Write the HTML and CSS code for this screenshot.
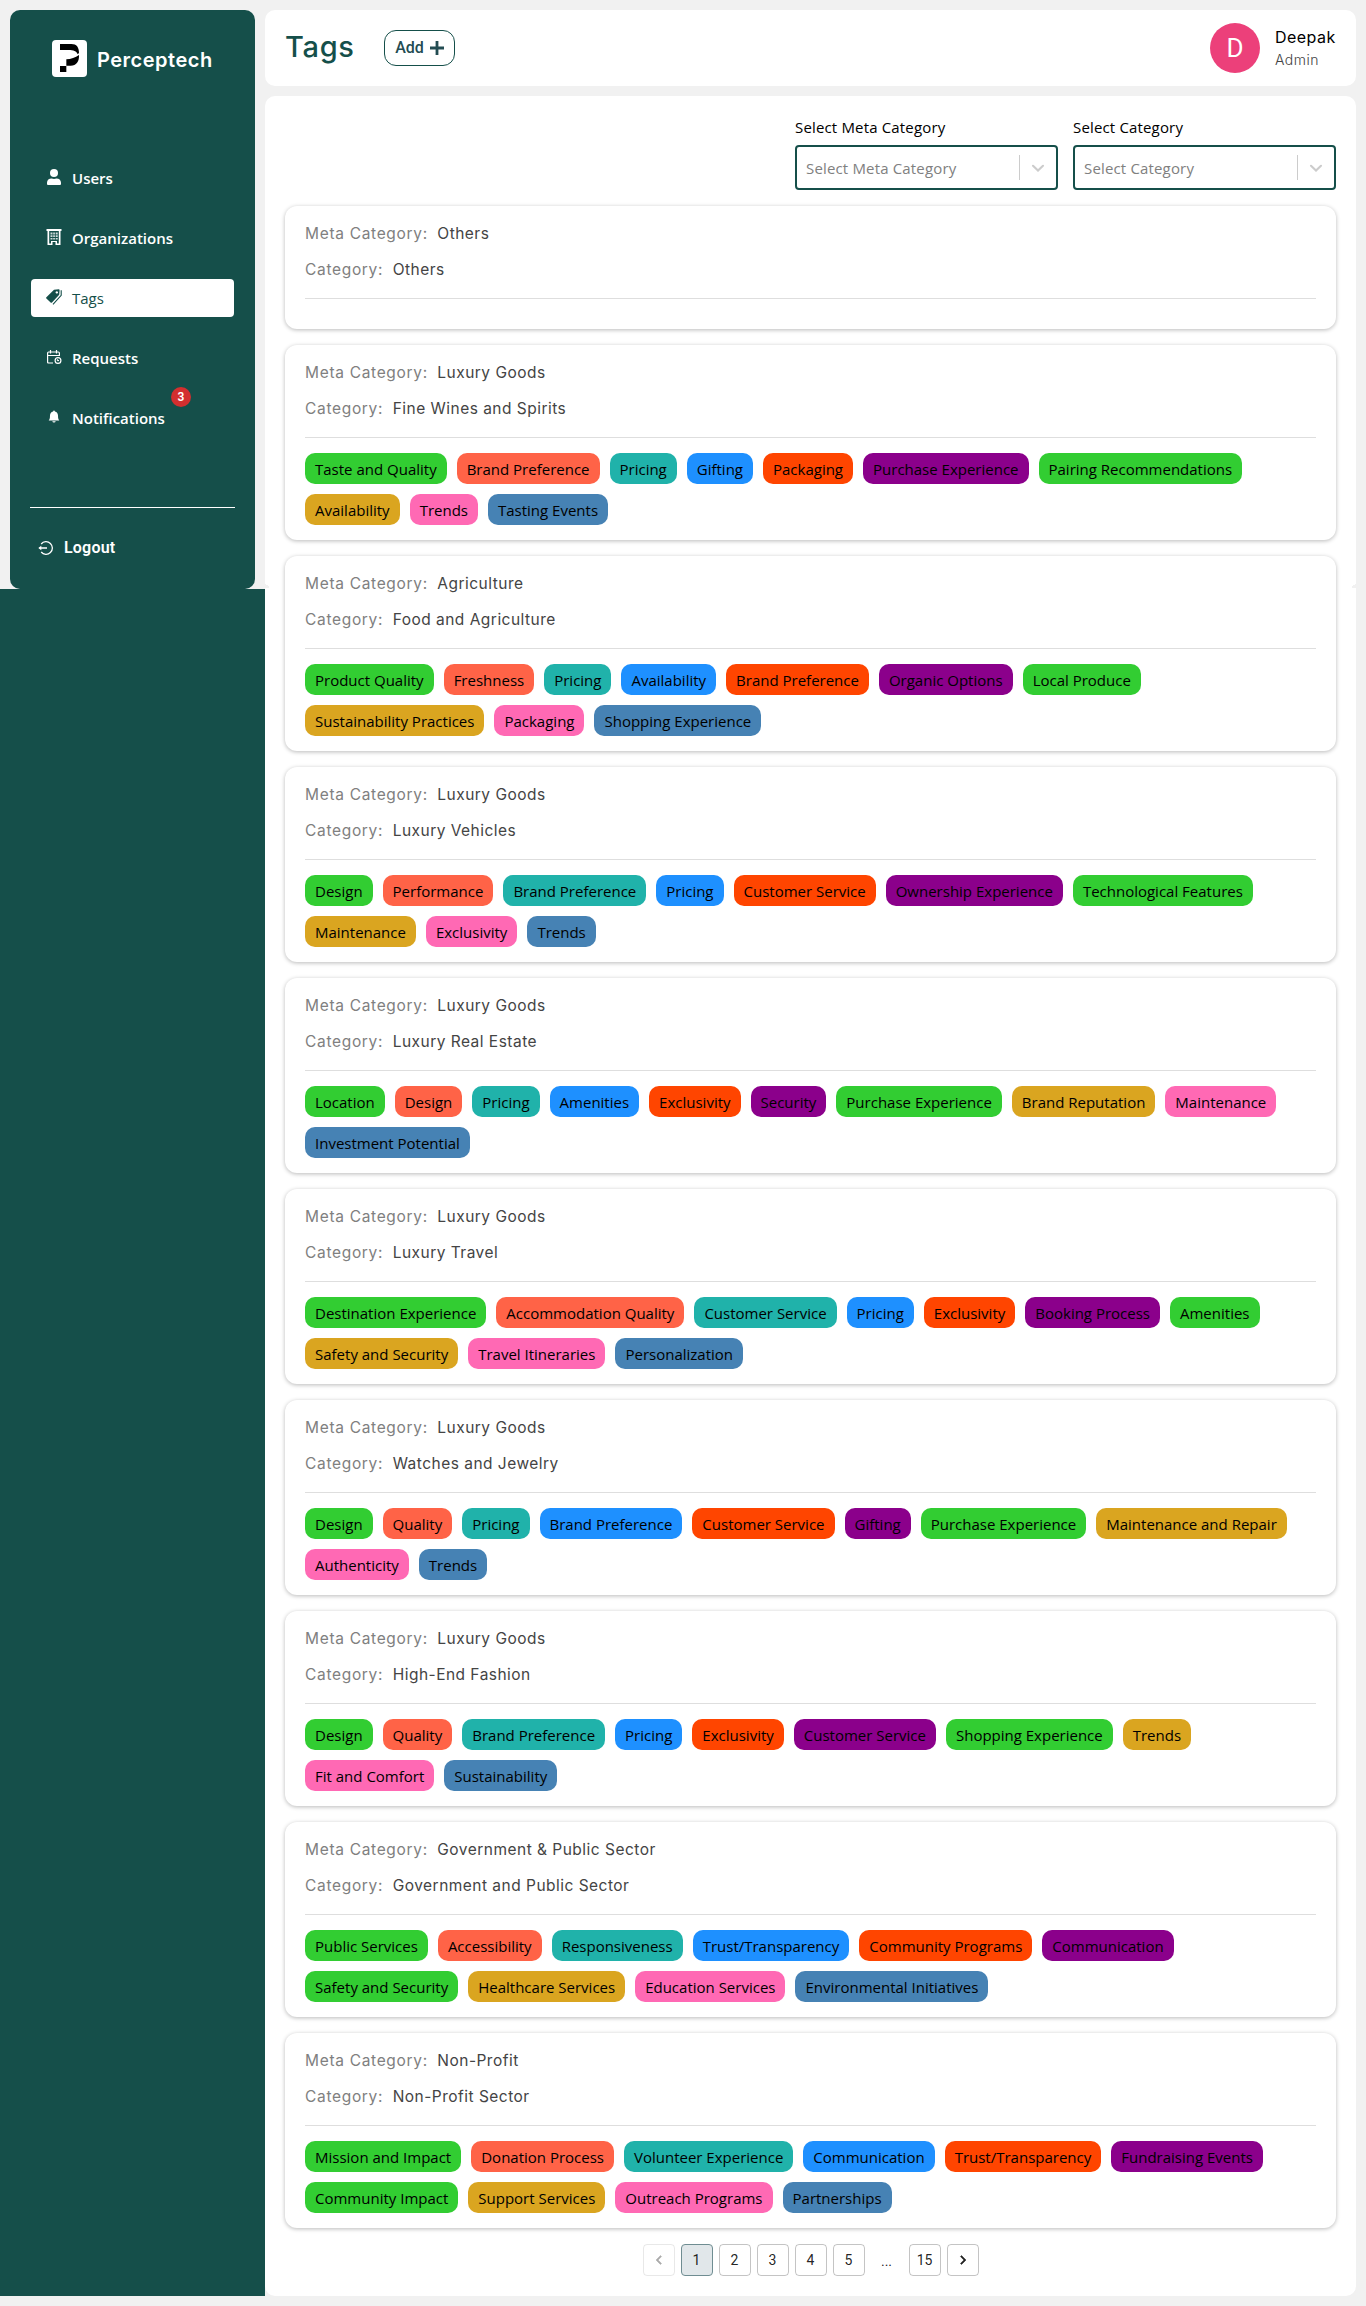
FILE: index.html
```html
<!DOCTYPE html>
<html lang="en">
<head>
<meta charset="utf-8">
<title>Tags</title>
<link rel="stylesheet" href="styles.css">
</head>
<body>
<div class="app">
  <aside class="rail">
    <div class="rail-frame">
      <nav class="sidebar">
        <div class="brand">
          <span class="logo"><svg width="35" height="37" viewBox="0 0 105 111"><path d="M24 12h34c16 0 23 10 23 27l-4 4C74 33 64 30 50 30H24z"/><path d="M43 58c14-1 27-5 38-13 1 20-8 32-25 32H43z"/><path d="M24 78h19v18H24z"/></svg></span>
          <span class="brand-name">Perceptech</span>
        </div>
        <ul class="nav">
          <li class="nav-item"><svg class="icon" viewBox="0 0 16 16"><circle cx="8" cy="4" r="4" fill="currentColor"/><path d="M1 16v-2.2C1 11 3 9.500 5.500 9.500c1.600.6 3.400.6 5 0C13 9.500 15 11 15 13.800V15q0 1-1 1H2q-1 0-1-1z" fill="currentColor"/></svg><span>Users</span></li>
          <li class="nav-item"><svg class="icon" viewBox="0 0 16 16" fill="currentColor" fill-rule="evenodd"><path d="M.5 0h15v2h-1v14h-5v-3h-3v3h-5V2h-1zM3.200 2v12.500H5V12h6v2.500h1.800V2z"/><path d="M4.500 3.500h2v2h-2zM7.200 3.500h1.700v2H7.200zM9.700 3.500h2v2h-2zM4.500 6.300h2v1.600h-2zM7.200 6.300h1.700v1.600H7.200zM9.700 6.300h2v1.600h-2zM4.500 8.900h2v1.600h-2zM7.200 8.900h1.700v1.600H7.200zM9.700 8.900h2v1.600h-2z" opacity=".8"/></svg><span>Organizations</span></li>
          <li class="nav-item active"><svg class="icon" viewBox="0 0 16 16"><path fill="currentColor" fill-rule="evenodd" d="M8 .8 12.800.3q.8 0 .8.900l-.4 4.600L6 13.400q-.7.600-1.400 0L.4 9.600q-.6-.7 0-1.400zM10.800 2.200a1.200 1.200 0 1 0 .01 0z"/><path d="M15.200 1.300v5.100L7 15.300" fill="none" stroke="currentColor" stroke-width="1.100"/></svg><span>Tags</span></li>
          <li class="nav-item"><svg class="icon" viewBox="0 0 16 16" fill="none" stroke="currentColor" stroke-width="1.200"><path d="M7 14H2.600q-1 0-1-1V4q0-1 1-1h9.800q1 0 1 1v3M1.600 6.500h11.800M4.500 1v3.600M10.500 1v3.600"/><circle cx="12" cy="11.500" r="2.900"/><path d="m11 10.500 1 1.200 1-.2"/></svg><span>Requests</span></li>
          <li class="nav-item"><svg class="icon" viewBox="0 0 16 16"><path fill="currentColor" d="M8 1.500q.8 0 .9.900C11 2.900 12 4.500 12 6.500c0 3 .5 4.200 1.300 5H2.700C3.500 10.700 4 9.500 4 6.500c0-2 1-3.600 3.100-4.100q.1-.9.900-.9M6.300 12.300h3.400q-.2 1.300-1.700 1.300t-1.700-1.300"/></svg><span>Notifications</span><b class="badge">3</b></li>
        </ul>
        <div class="logout"><svg width="16" height="16" viewBox="0 0 16 16" fill="none" stroke="currentColor" stroke-width="1.300"><path d="M3.200 4A6.300 6.300 0 1 1 3.200 12M9 8H1.500"/><path d="M.3 8l3-2.200v4.400z" fill="currentColor" stroke="none"/></svg><span>Logout</span></div>
      </nav>
    </div>
  </aside>
  <div class="page">
    <header class="header">
      <h1>Tags</h1>
      <button class="add">Add <svg width="14" height="14" viewBox="0 0 14 14"><path d="M7 0v14M0 7h14" stroke="currentColor" stroke-width="2.800"/></svg></button>
      <div class="profile">
        <span class="avatar">D</span>
        <div class="who"><span class="name">Deepak</span><span class="role">Admin</span></div>
      </div>
    </header>
    <main class="content">
      <div class="filters">
        <label class="filter">Select Meta Category
          <span class="select"><span class="placeholder">Select Meta Category</span><i class="separator"></i><svg width="20" height="20" viewBox="0 0 20 20"><path d="m5 7.800 5 4.700 5-4.700" fill="none" stroke="#ccc" stroke-width="2.100" stroke-linecap="round"/></svg></span>
        </label>
        <label class="filter">Select Category
          <span class="select"><span class="placeholder">Select Category</span><i class="separator"></i><svg width="20" height="20" viewBox="0 0 20 20"><path d="m5 7.800 5 4.700 5-4.700" fill="none" stroke="#ccc" stroke-width="2.100" stroke-linecap="round"/></svg></span>
        </label>
      </div>
      <div class="cards">
        <section class="card">
          <p class="row"><span class="key">Meta Category:</span><span class="value">Others</span></p>
          <p class="row"><span class="key">Category:</span><span class="value">Others</span></p>
          <div class="tags"></div>
        </section>
        <section class="card">
          <p class="row"><span class="key">Meta Category:</span><span class="value">Luxury Goods</span></p>
          <p class="row"><span class="key">Category:</span><span class="value">Fine Wines and Spirits</span></p>
          <div class="tags"><span>Taste and Quality</span><span>Brand Preference</span><span>Pricing</span><span>Gifting</span><span>Packaging</span><span>Purchase Experience</span><span>Pairing Recommendations</span><span>Availability</span><span>Trends</span><span>Tasting Events</span></div>
        </section>
        <section class="card">
          <p class="row"><span class="key">Meta Category:</span><span class="value">Agriculture</span></p>
          <p class="row"><span class="key">Category:</span><span class="value">Food and Agriculture</span></p>
          <div class="tags"><span>Product Quality</span><span>Freshness</span><span>Pricing</span><span>Availability</span><span>Brand Preference</span><span>Organic Options</span><span>Local Produce</span><span>Sustainability Practices</span><span>Packaging</span><span>Shopping Experience</span></div>
        </section>
        <section class="card">
          <p class="row"><span class="key">Meta Category:</span><span class="value">Luxury Goods</span></p>
          <p class="row"><span class="key">Category:</span><span class="value">Luxury Vehicles</span></p>
          <div class="tags"><span>Design</span><span>Performance</span><span>Brand Preference</span><span>Pricing</span><span>Customer Service</span><span>Ownership Experience</span><span>Technological Features</span><span>Maintenance</span><span>Exclusivity</span><span>Trends</span></div>
        </section>
        <section class="card">
          <p class="row"><span class="key">Meta Category:</span><span class="value">Luxury Goods</span></p>
          <p class="row"><span class="key">Category:</span><span class="value">Luxury Real Estate</span></p>
          <div class="tags"><span>Location</span><span>Design</span><span>Pricing</span><span>Amenities</span><span>Exclusivity</span><span>Security</span><span>Purchase Experience</span><span>Brand Reputation</span><span>Maintenance</span><span>Investment Potential</span></div>
        </section>
        <section class="card">
          <p class="row"><span class="key">Meta Category:</span><span class="value">Luxury Goods</span></p>
          <p class="row"><span class="key">Category:</span><span class="value">Luxury Travel</span></p>
          <div class="tags"><span>Destination Experience</span><span>Accommodation Quality</span><span>Customer Service</span><span>Pricing</span><span>Exclusivity</span><span>Booking Process</span><span>Amenities</span><span>Safety and Security</span><span>Travel Itineraries</span><span>Personalization</span></div>
        </section>
        <section class="card">
          <p class="row"><span class="key">Meta Category:</span><span class="value">Luxury Goods</span></p>
          <p class="row"><span class="key">Category:</span><span class="value">Watches and Jewelry</span></p>
          <div class="tags"><span>Design</span><span>Quality</span><span>Pricing</span><span>Brand Preference</span><span>Customer Service</span><span>Gifting</span><span>Purchase Experience</span><span>Maintenance and Repair</span><span>Authenticity</span><span>Trends</span></div>
        </section>
        <section class="card">
          <p class="row"><span class="key">Meta Category:</span><span class="value">Luxury Goods</span></p>
          <p class="row"><span class="key">Category:</span><span class="value">High-End Fashion</span></p>
          <div class="tags"><span>Design</span><span>Quality</span><span>Brand Preference</span><span>Pricing</span><span>Exclusivity</span><span>Customer Service</span><span>Shopping Experience</span><span>Trends</span><span>Fit and Comfort</span><span>Sustainability</span></div>
        </section>
        <section class="card">
          <p class="row"><span class="key">Meta Category:</span><span class="value">Government &amp; Public Sector</span></p>
          <p class="row"><span class="key">Category:</span><span class="value">Government and Public Sector</span></p>
          <div class="tags"><span>Public Services</span><span>Accessibility</span><span>Responsiveness</span><span>Trust/Transparency</span><span>Community Programs</span><span>Communication</span><span>Safety and Security</span><span>Healthcare Services</span><span>Education Services</span><span>Environmental Initiatives</span></div>
        </section>
        <section class="card">
          <p class="row"><span class="key">Meta Category:</span><span class="value">Non-Profit</span></p>
          <p class="row"><span class="key">Category:</span><span class="value">Non-Profit Sector</span></p>
          <div class="tags"><span>Mission and Impact</span><span>Donation Process</span><span>Volunteer Experience</span><span>Communication</span><span>Trust/Transparency</span><span>Fundraising Events</span><span>Community Impact</span><span>Support Services</span><span>Outreach Programs</span><span>Partnerships</span></div>
        </section>
      </div>
      <div class="pagination">
        <span class="pg disabled"><svg width="18" height="18" viewBox="0 0 24 24"><path d="M15.400 7.400 14 6l-6 6 6 6 1.400-1.400L10.800 12z" fill="currentColor" stroke="currentColor" stroke-width=".6"/></svg></span>
        <span class="pg selected">1</span><span class="pg">2</span><span class="pg">3</span><span class="pg">4</span><span class="pg">5</span><span class="dots">...</span><span class="pg">15</span>
        <span class="pg"><svg width="18" height="18" viewBox="0 0 24 24"><path d="M10 6 8.600 7.400 13.200 12l-4.600 4.600L10 18l6-6z" fill="currentColor" stroke="currentColor" stroke-width=".6"/></svg></span>
      </div>
    </main>
  </div>
</div>
</body>
</html>
```
FILE: styles.css
```css
* { box-sizing: border-box; }
body { margin: 0; background: #f1f1f1; font: 15px "Open Sans", sans-serif; color: #000; }
h1, p, ul { margin: 0; padding: 0; }

.app { display: flex; height: 2306px; }
.rail { width: 265px; height: 2296px; background: #154f4a; flex: none; }
.rail-frame { height: 589px; padding: 10px 10px 0; background: #f1f1f1; }
.sidebar { height: 579px; padding: 30px 20px 0; border-radius: 10px; background: #154f4a; color: #fff; }

.brand { display: flex; align-items: center; gap: 10px; padding-left: 22px; height: 37px; }
.logo { width: 35px; height: 37px; border-radius: 4px; background: #fff; }
.logo svg { display: block; }
.brand-name { font: 600 20px/28px Inter, sans-serif; letter-spacing: .5px; padding-top: 2px; }

.nav { list-style: none; margin-top: 82px; padding: 0 1px; display: grid; gap: 22px; }
.nav-item { position: relative; display: flex; align-items: center; gap: 10px; height: 38px; padding-left: 15px; border-radius: 4px; font-weight: 600; }
.nav-item span { line-height: 22px; padding-bottom: 1px; }
.nav-item .icon { width: 16px; height: 16px; flex: none; margin-top: -3px; }
.nav-item.active { background: #fff; color: #154f4a; font-weight: 500; }
.badge { position: absolute; left: 140px; top: -12px; width: 20px; height: 20px; border-radius: 50%; background: #d32f2f; font: 600 12px/20px Roboto, sans-serif; text-align: center; }
.logout { display: flex; gap: 10px; align-items: center; margin-top: 70px; padding: 30px 0 0 8px; border-top: 1px solid #fff; font: 600 16px/20px Roboto, sans-serif; letter-spacing: .2px; }

.page { width: 1091px; padding: 10px 0; display: flex; flex-direction: column; gap: 10px; }
.header { height: 76px; padding: 0 20px; border-radius: 10px; background: #fff; display: flex; align-items: center; }
.header h1 { font: 500 29px/40px Inter, sans-serif; letter-spacing: .7px; color: #154f4a; width: 99px; padding-bottom: 2px; }
.add { width: 71px; height: 36px; padding: 0; display: flex; align-items: center; justify-content: center; gap: 6px; border: 1px solid #154f4a; border-radius: 12px; background: #fff; color: #234c52; font: 500 16px/20px Roboto, sans-serif; }
.profile { margin-left: auto; display: flex; align-items: center; gap: 15px; }
.avatar { width: 50px; height: 50px; border-radius: 50%; background: #ec407a; color: #fff; font: 26px/51px Roboto, sans-serif; text-align: center; }
.who { display: grid; width: 61px; margin-top: -2px; font-family: Inter, sans-serif; }
.name { font-size: 16px; line-height: 24px; letter-spacing: .45px; }
.role { font-size: 14px; line-height: 21px; letter-spacing: .5px; font-weight: 300; color: #444; }

.content { position: relative; height: 2200px; padding: 20px; border-radius: 10px; background: #fff; }
/* rounded lower corners of the first viewport-high panel */
.content::before, .content::after { content: ""; position: absolute; top: 486px; width: 4px; height: 6px; }
.content::before { left: 0; background: linear-gradient(38deg, #f1f1f1 50%, transparent 51%); }
.content::after { right: 0; background: linear-gradient(-38deg, #f1f1f1 50%, transparent 51%); }

.filters { display: flex; justify-content: flex-end; gap: 15px; height: 90px; }
.filter { width: 263px; line-height: 22px; letter-spacing: .16px; }
.select { display: flex; align-items: center; height: 45px; margin-top: 7px; padding-right: 8px; border: 2px solid #154f4a; border-radius: 4px; background: #fff; }
.placeholder { flex: 1; padding-left: 9px; color: #808080; }
.separator { width: 1px; height: 25px; margin-right: 8px; background: #ccc; }

.cards { display: grid; gap: 16px; }
.card { padding: 9px 20px 15px; border-radius: 12px; box-shadow: 0 1px 4px rgba(0,0,0,.28); font: 15.500px Inter, sans-serif; }
.row { display: flex; gap: 9.500px; height: 36px; line-height: 37px; }
.key { color: #808080; letter-spacing: .68px; }
.value { color: #444; letter-spacing: .48px; }
.tags { margin-top: 11px; border-top: 1px solid #dedede; padding-top: 15px; display: flex; flex-wrap: wrap; gap: 10px; font: 15px "Open Sans", sans-serif; }
.tags span { height: 31px; padding: 0 10px; line-height: 33px; border-radius: 10px; background: limegreen; }
.tags span:nth-child(2) { background: tomato; }
.tags span:nth-child(3) { background: lightseagreen; }
.tags span:nth-child(4) { background: dodgerblue; }
.tags span:nth-child(5) { background: orangered; }
.tags span:nth-child(6) { background: darkmagenta; }
.tags span:nth-child(8) { background: goldenrod; }
.tags span:nth-child(9) { background: hotpink; }
.tags span:nth-child(10) { background: steelblue; }

.pagination { display: flex; justify-content: center; gap: 6px; margin-top: 15.500px; font: 14px/30px Roboto, sans-serif; color: rgba(0,0,0,.87); }
.pg { width: 32px; height: 32px; border: 1px solid rgba(0,0,0,.23); border-radius: 4px; display: flex; align-items: center; justify-content: center; }
.pg.selected { background: #e1e7ea; border-color: #6f8d92; }
.pg.disabled { opacity: .38; }
.dots { width: 32px; text-align: center; padding-top: 2px; }
```
